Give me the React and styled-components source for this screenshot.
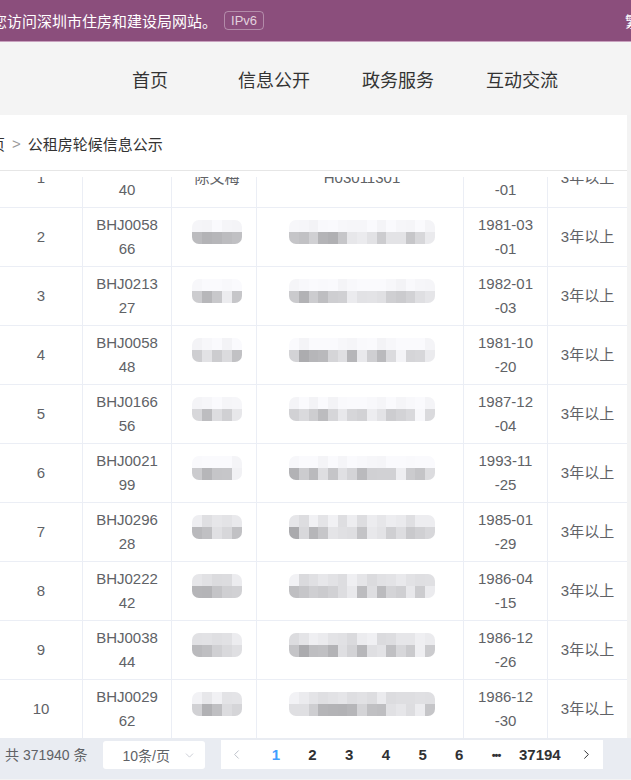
import React, { useLayoutEffect, useRef } from "react";
import styled, { createGlobalStyle } from "styled-components";
import { ChevronDown, ChevronLeft, ChevronRight } from "lucide-react";

const GlobalStyle = createGlobalStyle`
  html, body {
    margin: 0;
    padding: 0;
  }
  body {
    background: #f3f3f3;
    font-family: "Liberation Sans", "Noto Sans CJK SC", sans-serif;
    overflow: hidden;
  }
`;

const Page = styled.div`
  width: 631px;
  overflow: hidden;
`;

const TopBar = styled.div`
  height: 41px;
  background: #8b4e7c;
  border-bottom: 1px solid #c8a1be;
  display: flex;
  align-items: center;
  justify-content: space-between;
  color: #fff;
  font-size: 15px;
`;

const Welcome = styled.div`
  display: flex;
  align-items: center;
  margin-left: -8px;
  white-space: nowrap;
`;

const Badge = styled.span`
  margin-left: 7px;
  height: 17px;
  line-height: 17px;
  padding: 0 6px;
  border: 1px solid rgba(255, 255, 255, 0.35);
  border-radius: 4px;
  font-size: 13px;
  color: #e2d2de;
`;

const LangSwitch = styled.span`
  margin-right: -9px;
`;

const Nav = styled.nav`
  height: 73px;
  display: flex;
  align-items: center;
  padding-left: 88px;
  background: #f4f4f4;
`;

const NavItem = styled.a`
  width: 124px;
  text-align: center;
  font-size: 18px;
  color: #333;
  text-decoration: none;
`;

const Crumbs = styled.div`
  height: 53px;
  padding-top: 2px;
  background: #fff;
  border-bottom: 1px solid #e6e6e6;
  width: 627px;
  display: flex;
  align-items: center;
  font-size: 15px;
  color: #333;
  white-space: nowrap;
`;

const CrumbHome = styled.span`
  margin-left: -25px;
`;

const CrumbSep = styled.span`
  margin: 0 7px;
  color: #999;
`;

const TableArea = styled.div`
  width: 627px;
  background: #fff;
  padding-top: 6px;
`;

const Scroller = styled.div`
  height: 561px;
  overflow: hidden;
`;

const Row = styled.div`
  display: grid;
  grid-template-columns: 83px 89px 85px 207px 84px 79px;
  height: 59px;
  box-sizing: border-box;
  border-bottom: 1px solid #ebeef5;
`;

const Cell = styled.div`
  display: flex;
  flex-direction: column;
  align-items: center;
  justify-content: center;
  border-right: 1px solid #ebeef5;
  padding-left: ${(p) => p.$shift || 0}px;
  font-size: 15px;
  line-height: 24px;
  color: #606266;
  text-align: center;
  &:last-child {
    border-right: none;
  }
`;

const MosaicGrid = styled.div`
  display: grid;
  grid-template-columns: repeat(${(p) => p.$cols}, ${(p) => p.$size}px);
  grid-auto-rows: 12px;
  border-radius: 7px;
  overflow: hidden;
  filter: blur(0.35px);
  margin-bottom: 11px;
`;

const Tile = styled.span`
  display: block;
`;

const Footer = styled.div`
  height: 41px;
  box-sizing: border-box;
  padding: 3px 0 0 5px;
  background: #e9ecf2;
  display: flex;
  align-items: flex-start;
  font-size: 14px;
  color: #606266;
`;

const Total = styled.span`
  line-height: 28px;
  white-space: nowrap;
`;

const Select = styled.div`
  margin-left: 15px;
  width: 102px;
  height: 28px;
  box-sizing: border-box;
  padding: 0 9px 0 20px;
  background: #fff;
  border-radius: 3px;
  display: flex;
  align-items: center;
  justify-content: space-between;
  color: #606266;
`;

const Pager = styled.div`
  margin-left: 16px;
  margin-top: -1px;
  height: 29px;
  width: 382px;
  background: #fff;
  display: flex;
  align-items: center;
`;

const PageBtn = styled.span`
  width: ${(p) => p.$w || 36.7}px;
  flex: none;
  box-sizing: border-box;
  padding: ${(p) => p.$pad || "0"};
  display: flex;
  align-items: center;
  justify-content: center;
  font-size: 15px;
  font-weight: bold;
  color: ${(p) => (p.$active ? "#409eff" : "#303133")};
`;

const Dots = styled.span`
  font-size: 11px;
  letter-spacing: -1px;
  font-weight: bold;
  color: #303133;
`;

const rows = [
  { n: 1, id: "BHJ002340", date: "1980-07-01", name: "陈文梅", addr: "H03011301" },
  { n: 2, id: "BHJ005866", date: "1981-03-01" },
  { n: 3, id: "BHJ021327", date: "1982-01-03" },
  { n: 4, id: "BHJ005848", date: "1981-10-20" },
  { n: 5, id: "BHJ016656", date: "1987-12-04" },
  { n: 6, id: "BHJ002199", date: "1993-11-25" },
  { n: 7, id: "BHJ029628", date: "1985-01-29" },
  { n: 8, id: "BHJ022242", date: "1986-04-15" },
  { n: 9, id: "BHJ003844", date: "1986-12-26" },
  { n: 10, id: "BHJ002962", date: "1986-12-30" },
];

const noise = (seed, i) => {
  const x = Math.sin(seed * 91.7 + i * 12.9898) * 43758.5453;
  return x - Math.floor(x);
};

function Mosaic({ seed, cols, size, strong }) {
  const tiles = [];
  for (let r = 0; r < 2; r++) {
    for (let c = 0; c < cols; c++) {
      const fade = (c / cols) * 30;
      let v;
      if (r === 0) {
        v = strong ? 218 + noise(seed, c + 40) * 25 : 243 + noise(seed, c + 40) * 10;
      } else {
        v = 168 + noise(seed, c) * 55 + fade;
      }
      v = Math.min(250, Math.round(v));
      tiles.push(
        <Tile key={r + "-" + c} style={{ background: `rgb(${v},${v},${Math.min(255, v + 3)})` }} />
      );
    }
  }
  return (
    <MosaicGrid $cols={cols} $size={size}>
      {tiles}
    </MosaicGrid>
  );
}

function split(v, at) {
  return (
    <>
      <span>{v.slice(0, at)}</span>
      <span>{v.slice(at)}</span>
    </>
  );
}

export default function App() {
  const scroller = useRef(null);

  useLayoutEffect(() => {
    if (scroller.current) scroller.current.scrollTop = 28;
  }, []);

  return (
    <Page>
      <GlobalStyle />
      <TopBar>
        <Welcome>
          您访问深圳市住房和建设局网站。
          <Badge>IPv6</Badge>
        </Welcome>
        <LangSwitch>繁</LangSwitch>
      </TopBar>
      <Nav>
        {["首页", "信息公开", "政务服务", "互动交流"].map((t) => (
          <NavItem key={t}>{t}</NavItem>
        ))}
      </Nav>
      <Crumbs>
        <CrumbHome>首页</CrumbHome>
        <CrumbSep>&gt;</CrumbSep>
        <span>公租房轮候信息公示</span>
      </Crumbs>
      <TableArea>
        <Scroller ref={scroller}>
          {rows.map((r) => (
            <Row key={r.n}>
              <Cell>{r.n}</Cell>
              <Cell>{split(r.id, 7)}</Cell>
              <Cell $shift={6}>
                {r.name ? r.name : <Mosaic seed={r.n} cols={5} size={10} strong={r.n > 6} />}
              </Cell>
              <Cell $shift={4}>
                {r.addr ? r.addr : <Mosaic seed={r.n + 20} cols={15} size={9.7} strong={r.n > 6} />}
              </Cell>
              <Cell>{split(r.date, 7)}</Cell>
              <Cell>3年以上</Cell>
            </Row>
          ))}
        </Scroller>
      </TableArea>
      <Footer>
        <Total>共 371940 条</Total>
        <Select>
          <span>10条/页</span>
          <ChevronDown size={13} color="#c0c4cc" strokeWidth={1.5} />
        </Select>
        <Pager>
          <PageBtn $w={37} $pad="0 5px 0 0">
            <ChevronLeft size={15} color="#c0c4cc" strokeWidth={1.6} />
          </PageBtn>
          {[1, 2, 3, 4, 5, 6].map((n) => (
            <PageBtn key={n} $active={n === 1}>
              {n}
            </PageBtn>
          ))}
          <PageBtn>
            <Dots>•••</Dots>
          </PageBtn>
          <PageBtn $w={51}>37194</PageBtn>
          <PageBtn $w={37} $pad="0 0 0 5px">
            <ChevronRight size={15} color="#303133" strokeWidth={1.6} />
          </PageBtn>
        </Pager>
      </Footer>
    </Page>
  );
}
